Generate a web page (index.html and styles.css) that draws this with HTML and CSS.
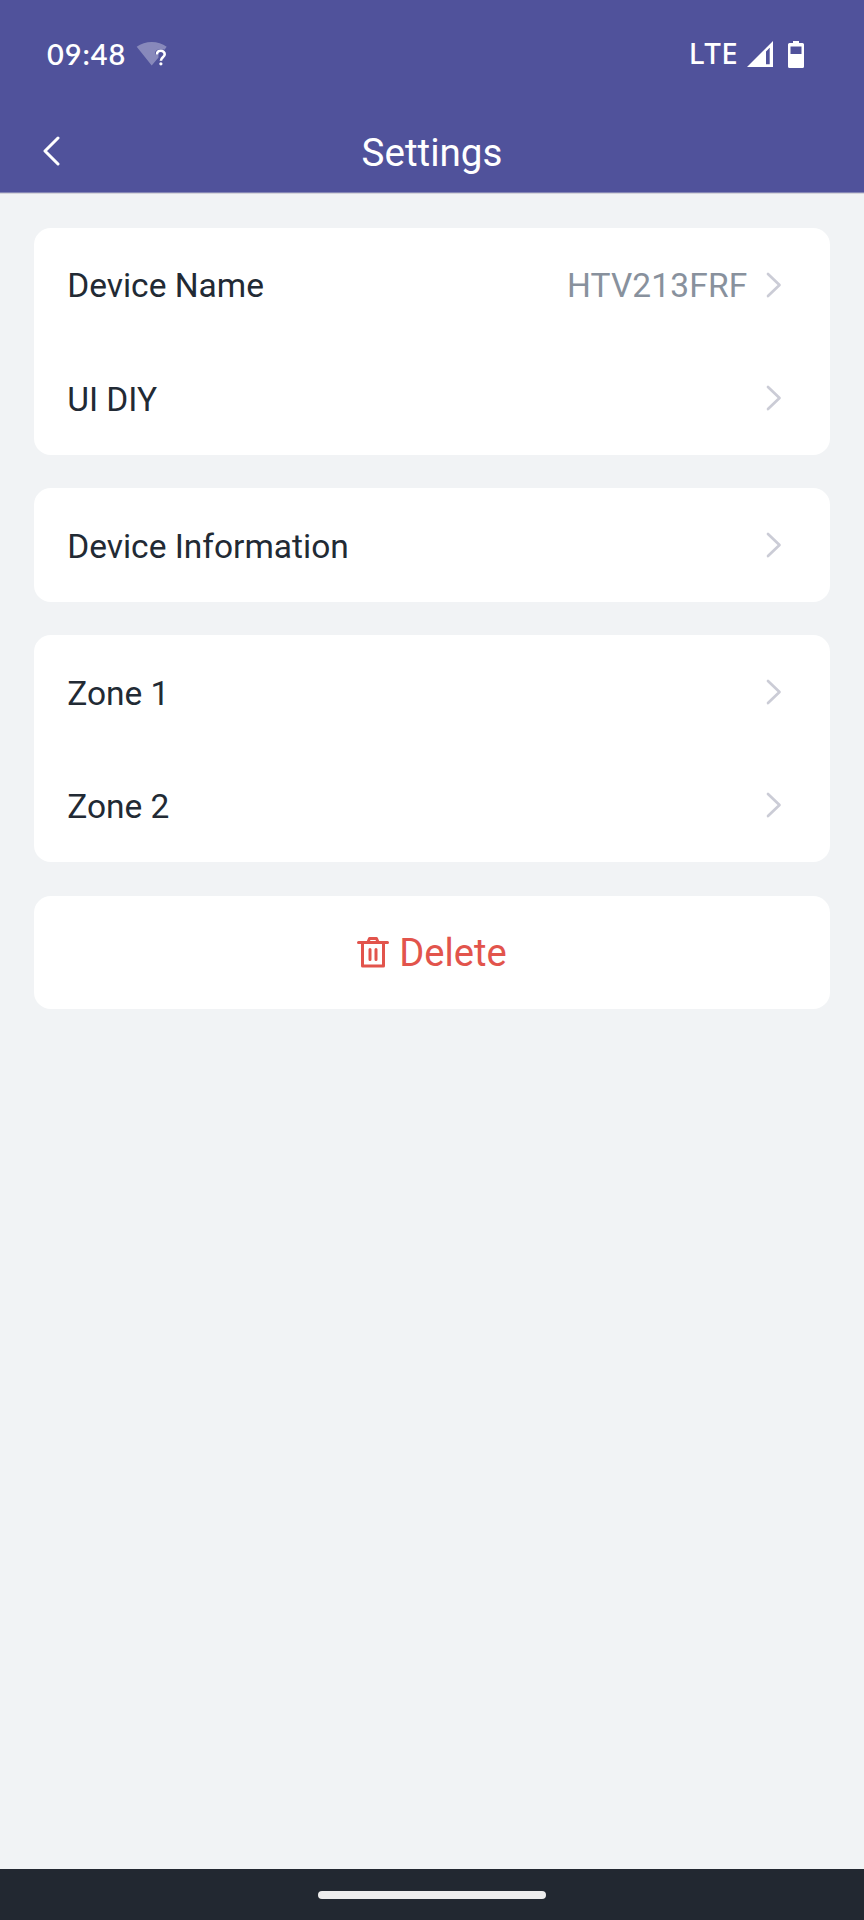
FILE: index.html
```html
<!DOCTYPE html>
<html lang="en">
<head>
<meta charset="utf-8">
<title>Settings</title>
<link rel="stylesheet" href="styles.css">
</head>
<body>
<div class="screen">
  <header class="header">
    <div class="status">
      <div class="status-left">
        <span class="time">09:48</span>
        <svg class="wifi" width="32" height="28" viewBox="0 0 32 28">
          <path d="M0.700 6.800C9 0.500 22.500 0.500 30.700 6.800L28.500 9.700C23 7.500 18.500 10 19 14.500H22.500V17.500L15.700 25.500Z" fill="#fff" fill-opacity=".32"/>
          <path d="M21 14.500C21 9.500 28.700 9.700 28.700 14.200C28.700 17.300 24.900 17.300 24.900 20.800" fill="none" stroke="#fff" stroke-width="2.600"/>
          <circle cx="24.900" cy="23.800" r="1.600" fill="#fff"/>
        </svg>
      </div>
      <div class="status-right">
        <span class="network">LTE</span>
        <svg class="signal" width="26" height="26" viewBox="0 0 26 26">
          <path fill-rule="evenodd" d="M0 26L26 0V26ZM19 10.500L22.700 6.800V23.300H19Z" fill="#fff"/>
        </svg>
        <svg class="battery" width="16" height="27" viewBox="0 0 16 27">
          <path fill-rule="evenodd" d="M5 0H11V2H14.500Q16 2 16 3.500V25.500Q16 27 14.500 27H1.500Q0 27 0 25.500V3.500Q0 2 1.500 2H5ZM2.500 5.500V13H13.500V5.500Z" fill="#fff"/>
        </svg>
      </div>
    </div>
    <div class="titlebar">
      <svg class="back" width="18" height="32" viewBox="0 0 18 32">
        <path d="M16 3L3 16L16 29" fill="none" stroke="#fff" stroke-width="3" stroke-linecap="round" stroke-linejoin="round"/>
      </svg>
      <h1 class="title">Settings</h1>
    </div>
  </header>
  <main class="content">
    <section class="card">
      <div class="row"><span class="label">Device Name</span><span class="value">HTV213FRF</span><svg class="chevron" viewBox="0 0 16 26"><path d="M2 2L13.500 13L2 24"/></svg></div>
      <div class="row"><span class="label">UI DIY</span><svg class="chevron" viewBox="0 0 16 26"><path d="M2 2L13.500 13L2 24"/></svg></div>
    </section>
    <section class="card">
      <div class="row"><span class="label">Device Information</span><svg class="chevron" viewBox="0 0 16 26"><path d="M2 2L13.500 13L2 24"/></svg></div>
    </section>
    <section class="card">
      <div class="row"><span class="label">Zone 1</span><svg class="chevron" viewBox="0 0 16 26"><path d="M2 2L13.500 13L2 24"/></svg></div>
      <div class="row"><span class="label">Zone 2</span><svg class="chevron" viewBox="0 0 16 26"><path d="M2 2L13.500 13L2 24"/></svg></div>
    </section>
    <section class="card">
      <div class="row delete">
        <svg class="trash" width="32" height="32" viewBox="0 0 32 32">
          <path d="M1.500 6.500H30.500M5.500 6.500V30H26.500V6.500M11 6L12.500 2.500H19.500L21 6M13 13.500V23.500M19 13.500V23.500" fill="none" stroke="#e2544c" stroke-width="3" stroke-linecap="round" stroke-linejoin="round"/>
        </svg>
        <span class="delete-text">Delete</span>
      </div>
    </section>
  </main>
  <footer class="nav"><div class="handle"></div></footer>
</div>
</body>
</html>
```
FILE: styles.css
```css
body { margin: 0; }
.screen {
  width: 864px;
  height: 1920px;
  display: flex;
  flex-direction: column;
  background: #f1f3f5;
  font-family: Roboto, sans-serif;
  color: #222a34;
}
.header {
  box-sizing: border-box;
  height: 193px;
  background: #50529b;
  border-bottom: 1px solid #8586b5;
  box-shadow: 0 1px 0 #d4d4da;
  color: #fff;
}
.status {
  height: 108px;
  display: flex;
  justify-content: space-between;
  padding: 0 60px 0 47px;
}
.status-left, .status-right { display: flex; align-items: center; }
.time {
  font: 600 29px Lato, sans-serif;
  letter-spacing: 0.9px;
  padding-bottom: 2px;
}
.wifi { margin-left: 10px; }
.network { font: 500 29.5px "Noto Sans", sans-serif; letter-spacing: 0.4px; padding-bottom: 3px; }
.signal { margin-left: 9px; }
.battery { margin-left: 15px; }
.titlebar {
  height: 84px;
  display: grid;
  grid-template-columns: 43px 1fr 43px;
  align-items: center;
}
.back { margin: 2px 0 0 42px; }
.title {
  margin: 5px 0 0;
  text-align: center;
  font-size: 38.6px;
  font-weight: 400;
}
.content {
  flex: 1;
  display: flex;
  flex-direction: column;
  gap: 33.6px;
  padding: 35px 33.6px 0;
}
.card { background: #fff; border-radius: 16.8px; }
.row {
  box-sizing: border-box;
  height: 113.4px;
  display: flex;
  align-items: center;
  padding: 0 48.6px 0 33.6px;
  font-size: 33.5px;
}
.label { flex: 1; padding-top: 2px; }
.value { padding-top: 2px; color: #88919d; letter-spacing: 0.15px; }
.chevron {
  width: 16px;
  height: 26px;
  margin-left: 18.4px;
  fill: none;
  stroke: #cbccd6;
  stroke-width: 2.7;
  stroke-linecap: round;
  stroke-linejoin: round;
}
.delete {
  justify-content: center;
  gap: 10px;
  padding: 0;
  color: #e2544c;
  font-size: 38.2px;
}
.delete-text { padding-top: 2px; }
.nav {
  height: 51px;
  display: flex;
  align-items: center;
  justify-content: center;
  background: #222831;
}
.handle { width: 228px; height: 8px; border-radius: 4px; background: #ededed; }
```
